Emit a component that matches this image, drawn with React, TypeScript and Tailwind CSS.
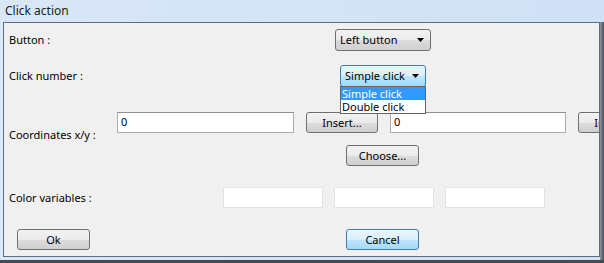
const font = "font-['Noto_Sans','Segoe_UI',sans-serif] text-[11px] leading-[14px]";

const Arrow = () => (
  <svg width="7" height="4" viewBox="0 0 7 4" className="shrink-0">
    <path d="M0 0h7L3.5 4z" fill="#000" />
  </svg>
);

const Combo = ({ label, focused, width }: { label: string; focused?: boolean; width: string }) => (
  <div
    className={`${width} h-[22px] flex items-center justify-between pl-[4px] pr-[6px] rounded-[3px] border ${
      focused
        ? "border-[#3c7fb1] bg-[linear-gradient(#e8f5fc,#d9effc_50%,#bee6fd_50%,#a7d9f5)]"
        : "border-[#707070] bg-[linear-gradient(#f2f2f2,#ebebeb_50%,#dddddd_50%,#cfcfcf)]"
    }`}
  >
    <span className="text-black">{label}</span>
    <Arrow />
  </div>
);

const Button = ({ label, focused, width }: { label: string; focused?: boolean; width: string }) => (
  <div
    className={`${width} h-[21px] shrink-0 flex items-center justify-center rounded-[3px] border ${
      focused
        ? "border-[#3c7fb1] bg-[linear-gradient(#eaf6fd,#d9f0fc_50%,#bee6fd_50%,#a7d9f5)]"
        : "border-[#707070] bg-[linear-gradient(#f2f2f2,#ebebeb_50%,#dddddd_50%,#cfcfcf)]"
    }`}
  >
    {label}
  </div>
);

const TextInput = ({ value, width, light }: { value?: string; width: string; light?: boolean }) => (
  <div
    className={`${width} h-[21px] shrink-0 bg-white border pl-[3px] pt-[2px] ${
      light ? "border-[#e3e3e3]" : "border-[#abadb3] border-t-[#8e8f8f]"
    }`}
  >
    {value}
  </div>
);

export default function App() {
  return (
    <div className={`${font} w-[604px] h-[263px] overflow-hidden bg-[linear-gradient(90deg,#d9e7f7,#cfe1f5)] text-black`}>
      {/* title bar */}
      <div className="h-[22px] pl-[5px] pt-[3px] text-[12px] leading-[16px] text-[#1e1e1e]">Click action</div>

      <div className="flex">
        {/* dialog body */}
        <div className="ml-[3px] w-[597px] h-[235px] border border-[#5d6d80] bg-[#f0f0f0] overflow-hidden relative">
          {/* Button */}
          <div className="flex items-center h-[22px] mt-[6px]">
            <span className="pl-[5px] w-[331px] shrink-0">Button :</span>
            <Combo label="Left button" width="w-[96px]" />
          </div>

          {/* Click number */}
          <div className="flex items-center h-[22px] mt-[14px]">
            <span className="pl-[5px] w-[336px] shrink-0">Click number :</span>
            <div className="relative">
              <Combo label="Simple click" width="w-[86px]" focused />
              <div className="absolute left-0 top-[21px] w-[86px] bg-white border border-[#646464] z-10">
                <div className="h-[13px] leading-[13px] pl-[1px] bg-[#3399ff] text-white">Simple click</div>
                <div className="h-[13px] leading-[13px] pl-[1px]">Double click</div>
              </div>
            </div>
          </div>

          {/* Coordinates */}
          <div className="flex mt-[25px]">
            <span className="pl-[5px] w-[113px] shrink-0 pt-[16px]">Coordinates x/y :</span>
            <div className="flex flex-col">
              <div className="flex items-center gap-[12px]">
                <TextInput value="0" width="w-[177px]" />
                <Button label="Insert..." width="w-[72px]" />
                <TextInput value="0" width="w-[176px]" />
                <Button label="Insert..." width="w-[72px]" />
              </div>
              <div className="mt-[12px] ml-[229px]">
                <Button label="Choose..." width="w-[73px]" />
              </div>
            </div>
          </div>

          {/* Color variables */}
          <div className="flex items-center mt-[21px]">
            <span className="pl-[5px] w-[219px] shrink-0">Color variables :</span>
            <div className="flex gap-[11px]">
              <TextInput width="w-[100px]" light />
              <TextInput width="w-[100px]" light />
              <TextInput width="w-[100px]" light />
            </div>
          </div>

          {/* Actions */}
          <div className="flex mt-[21px]">
            <div className="ml-[13px]">
              <Button label="Ok" width="w-[73px]" />
            </div>
            <div className="ml-[256px]">
              <Button label="Cancel" width="w-[73px]" focused />
            </div>
          </div>
        </div>
        {/* right frame shadow */}
        <div className="w-[4px] h-[238px] bg-[linear-gradient(90deg,#8a96a3,#4a4f55)]" />
      </div>
      <div className="h-[3px] bg-[#444a50]" />
    </div>
  );
}
